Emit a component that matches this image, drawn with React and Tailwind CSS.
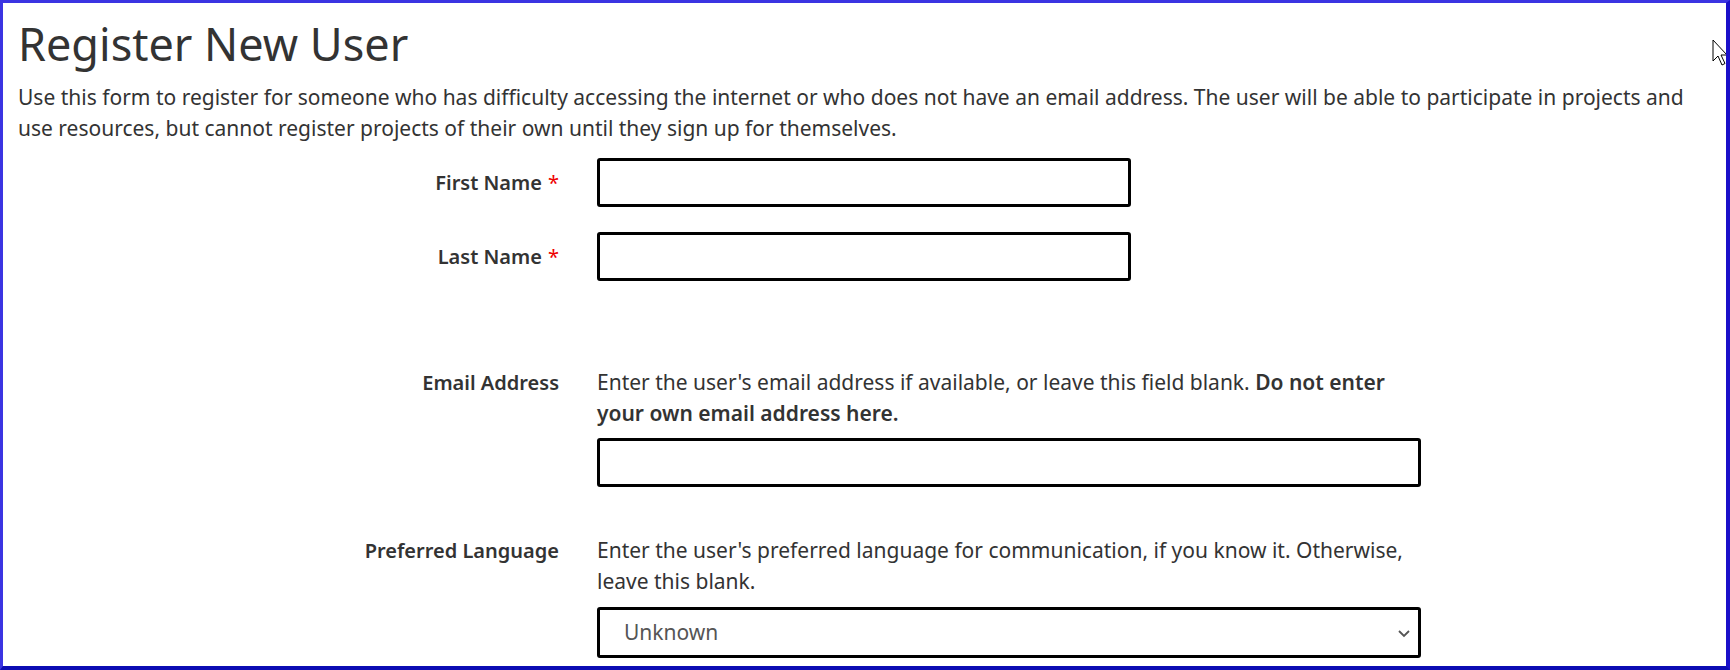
import React from "react";

function Label({ children, required }) {
  return (
    <div className="w-[541px] shrink-0 text-right text-[20px] font-semibold leading-[31px] text-[#333]">
      {children}
      {required && <span className="ml-[6px] font-normal text-[#e00]">*</span>}
    </div>
  );
}

export default function App() {
  return (
    <div className="relative h-[670px] w-[1730px] overflow-hidden bg-white border-t-[3px] border-l-[3px] border-r-[4px] border-b-[4px] border-t-[#3b34e2] border-l-[#3b34e2] border-r-[#1a10c9] border-b-[#0c0cb3] font-['Noto_Sans',sans-serif] text-[#333]">
      <div className="px-[15px] pt-[13px]">
        <h1 className="text-[45px] leading-[56px] font-normal text-[#333]">Register New User</h1>
        <p className="mt-[10px] text-[21px] leading-[31px] text-[#333]">
          Use this form to register for someone who has difficulty accessing the internet or who does not have an email address. The user will be able to participate in projects and use resources, but cannot register projects of their own until they sign up for themselves.
        </p>

        <div className="mt-[14px] flex flex-col">
          <div className="flex items-center gap-[38px]">
            <Label required>First Name</Label>
            <input className="h-[49px] w-[534px] rounded-[3px] border-[3px] border-black bg-white outline-none" />
          </div>
          <div className="mt-[25px] flex items-center gap-[38px]">
            <Label required>Last Name</Label>
            <input className="h-[49px] w-[534px] rounded-[3px] border-[3px] border-black bg-white outline-none" />
          </div>

          <div className="mt-[86px] flex items-start gap-[38px]">
            <Label>Email Address</Label>
            <div className="w-[824px]">
              <div className="text-[21px] leading-[31px] text-[#333]">
                Enter the user's email address if available, or leave this field blank. <b className="font-semibold">Do not enter your own email address here.</b>
              </div>
              <input className="mt-[9px] h-[49px] w-[824px] rounded-[3px] border-[3px] border-black bg-white outline-none" />
            </div>
          </div>

          <div className="mt-[48px] flex items-start gap-[38px]">
            <Label>Preferred Language</Label>
            <div className="w-[824px]">
              <div className="text-[21px] leading-[31px] text-[#333]">
                Enter the user's preferred language for communication, if you know it. Otherwise, leave this blank.
              </div>
              <div className="mt-[10px] flex h-[51px] w-[824px] items-center justify-between rounded-[3px] border-[3px] border-black bg-white pl-[24px] pr-[7px]">
                <span className="text-[21px] text-[#555]">Unknown</span>
                <svg width="14" height="10" viewBox="0 0 14 10" fill="none">
                  <path d="M2 3 L7 8 L12 3" stroke="#555" strokeWidth="1.8" />
                </svg>
              </div>
            </div>
          </div>
        </div>
      </div>

      <svg className="absolute left-[1709px] top-[36px]" width="14" height="30" viewBox="0 0 14 30">
        <path d="M1 1 L1 22 L6 17 L10 26 L13 24.5 L9 16 L15 16 Z" fill="white" stroke="black" strokeWidth="1" strokeLinejoin="miter" />
      </svg>
    </div>
  );
}
